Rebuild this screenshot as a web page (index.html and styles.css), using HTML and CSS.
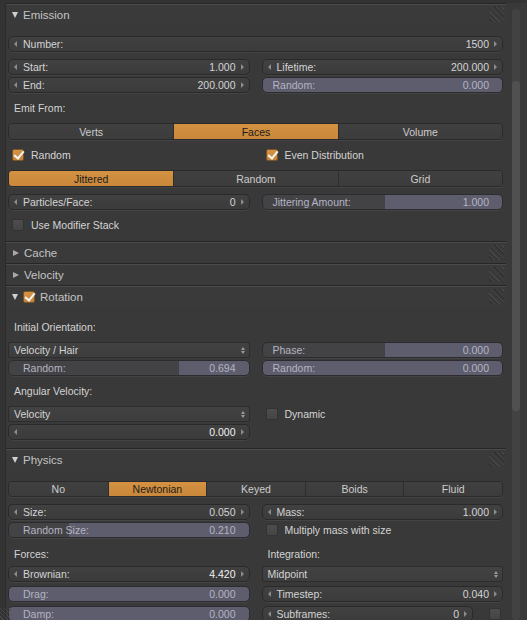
FILE: index.html
```html
<!DOCTYPE html>
<html lang="en">
<head>
  <meta charset="UTF-8">
  <title>Particle Settings</title>
  <link rel="stylesheet" href="styles.css">
</head>
<body>
  <div class="region">
    <div class="panels">

      <section class="panel">
        <div class="head"><i class="tri down"></i><span class="title">Emission</span><i class="grip"></i></div>
        <div class="body emission">
          <div class="num"><span>Number:</span><span>1500</span></div>
          <div class="cols">
            <div class="col">
              <div class="num"><span>Start:</span><span>1.000</span></div>
              <div class="num"><span>End:</span><span>200.000</span></div>
            </div>
            <div class="col">
              <div class="num"><span>Lifetime:</span><span>200.000</span></div>
              <div class="slider" style="--p:0%"><span>Random:</span><span>0.000</span></div>
            </div>
          </div>
          <div class="label">Emit From:</div>
          <div class="seg"><span>Verts</span><span class="on">Faces</span><span>Volume</span></div>
          <div class="cols">
            <label class="check"><span class="box on"></span>Random</label>
            <label class="check"><span class="box on"></span>Even Distribution</label>
          </div>
          <div class="seg"><span class="on">Jittered</span><span>Random</span><span>Grid</span></div>
          <div class="cols">
            <div class="num"><span>Particles/Face:</span><span>0</span></div>
            <div class="slider" style="--p:51%"><span>Jittering Amount:</span><span>1.000</span></div>
          </div>
          <label class="check"><span class="box"></span>Use Modifier Stack</label>
        </div>
      </section>

      <section class="panel">
        <div class="head"><i class="tri right"></i><span class="title">Cache</span><i class="grip"></i></div>
      </section>

      <section class="panel">
        <div class="head"><i class="tri right"></i><span class="title">Velocity</span><i class="grip"></i></div>
      </section>

      <section class="panel">
        <div class="head"><i class="tri down"></i><span class="box on"></span><span class="title">Rotation</span><i class="grip"></i></div>
        <div class="body rotation">
          <div class="label">Initial Orientation:</div>
          <div class="cols">
            <div class="col">
              <div class="menu"><span>Velocity / Hair</span><i class="updown"></i></div>
              <div class="slider" style="--p:71%"><span>Random:</span><span>0.694</span></div>
            </div>
            <div class="col">
              <div class="slider" style="--p:51%"><span>Phase:</span><span>0.000</span></div>
              <div class="slider" style="--p:0%"><span>Random:</span><span>0.000</span></div>
            </div>
          </div>
          <div class="label">Angular Velocity:</div>
          <div class="cols">
            <div class="col">
              <div class="menu"><span>Velocity</span><i class="updown"></i></div>
              <div class="num"><span></span><span class="bright">0.000</span></div>
            </div>
            <div class="col">
              <label class="check"><span class="box"></span>Dynamic</label>
            </div>
          </div>
        </div>
      </section>

      <section class="panel">
        <div class="head"><i class="tri down"></i><span class="title">Physics</span><i class="grip"></i></div>
        <div class="body physics">
          <div class="seg"><span>No</span><span class="on">Newtonian</span><span>Keyed</span><span>Boids</span><span>Fluid</span></div>
          <div class="cols">
            <div class="col">
              <div class="num"><span>Size:</span><span>0.050</span></div>
              <div class="slider" style="--p:25%"><span>Random Size:</span><span>0.210</span></div>
              <div class="label sub">Forces:</div>
              <div class="stack">
                <div class="num"><span>Brownian:</span><span class="bright">4.420</span></div>
                <div class="slider" style="--p:0%"><span>Drag:</span><span>0.000</span></div>
                <div class="slider" style="--p:0%"><span>Damp:</span><span>0.000</span></div>
              </div>
            </div>
            <div class="col">
              <div class="num"><span>Mass:</span><span>1.000</span></div>
              <label class="check"><span class="box"></span>Multiply mass with size</label>
              <div class="label sub">Integration:</div>
              <div class="stack">
                <div class="menu"><span>Midpoint</span><i class="updown"></i></div>
                <div class="num"><span>Timestep:</span><span>0.040</span></div>
                <div class="split">
                  <div class="num"><span>Subframes:</span><span>0</span></div>
                  <span class="box"></span>
                </div>
              </div>
            </div>
          </div>
        </div>
      </section>

    </div>
    <div class="scroll">
      <div class="track"><div class="thumb"></div></div>
    </div>
  </div>
  <i class="corner"></i>
</body>
</html>
```

FILE: styles.css
```css
* {
  margin: 0;
  padding: 0;
  box-sizing: border-box;
}

html,
body {
  height: 100%;
}

body {
  position: relative;
  overflow: hidden;
  background: #393939;
  color: #d4d4d4;
  font-family: "Liberation Sans", Arial, sans-serif;
  font-size: 10.5px;
}

.region {
  display: flex;
  height: 620px;
  padding-top: 3px;
  background: #333;
}

.panels {
  width: 501px;
  background: #393939;
  border-left: 1px solid #2b2b2b;
  margin-left: 5px;
}

.panel {
  border-top: 1px solid #262626;
}

.head {
  display: flex;
  align-items: center;
  height: 21px;
  padding-left: 6px;
  background: #3a3a3a;
  box-shadow: inset 0 1px 0 #4b4b4b;
  color: #c2c2c2;
  font-size: 11.5px;
}

.head .title {
  flex: 1;
}

.head .box {
  margin-right: 5px;
}

.tri {
  display: block;
  width: 0;
  height: 0;
  margin-right: 5px;
}

.tri.down {
  border-left: 3.5px solid transparent;
  border-right: 3.5px solid transparent;
  border-top: 6px solid #cfcfcf;
  margin-top: 1px;
}

.tri.right {
  border-top: 3.5px solid transparent;
  border-bottom: 3.5px solid transparent;
  border-left: 6px solid #a9a9a9;
  margin-left: 1px;
  margin-right: 5px;
}

.grip {
  display: block;
  width: 15px;
  height: 15px;
  margin-right: 2px;
  background: repeating-linear-gradient(45deg, transparent 0 2px, #2e2e2e 2px 3px, #4a4a4a 3px 4px);
  opacity: .8;
}

.body {
  display: flex;
  flex-direction: column;
  gap: 7px;
  padding: 11px 3px 8px 2px;
}

.rotation {
  padding-top: 12px;
}

.cols {
  display: grid;
  grid-template-columns: 1fr 1fr;
  column-gap: 12px;
}

.col {
  display: flex;
  flex-direction: column;
  gap: 2px;
}

.label {
  height: 16px;
  line-height: 16px;
  padding-left: 6px;
}

.label.sub {
  margin-top: 6px;
  margin-bottom: 2px;
}

.stack {
  display: flex;
  flex-direction: column;
  gap: 4px;
}

/* number field with arrows */
.num {
  position: relative;
  display: flex;
  align-items: center;
  justify-content: space-between;
  height: 16px;
  padding: 0 13px 0 14px;
  background: linear-gradient(#414141, #3b3b3b);
  border: 1px solid #2a2a2a;
  border-radius: 5px;
  box-shadow: 0 1px 0 #444;
}

.num:before,
.num:after {
  content: '';
  position: absolute;
  top: 4px;
  border-top: 3px solid transparent;
  border-bottom: 3px solid transparent;
}

.num:before {
  left: 5px;
  border-right: 3px solid #8c8c8c;
}

.num:after {
  right: 5px;
  border-left: 3px solid #8c8c8c;
}

.bright {
  color: #f0f0f0;
}

/* slider */
.slider {
  display: flex;
  align-items: center;
  justify-content: space-between;
  height: 16px;
  padding: 0 13px 0 14px;
  background: linear-gradient(to right, #434346 var(--p), #5d5d6d var(--p));
  border: 1px solid #2c2c30;
  border-radius: 5px;
  color: #b4b4c2;
  box-shadow: 0 1px 0 #444;
}

.col:last-child .slider,
.cols > .slider {
  padding-left: 10px;
}

/* dropdown */
.menu {
  display: flex;
  align-items: center;
  justify-content: space-between;
  height: 16px;
  padding: 0 4px 0 5px;
  background: linear-gradient(#424242, #3d3d3d);
  border: 1px solid #2d2d2d;
  border-radius: 2px;
}

.updown {
  display: flex;
  flex-direction: column;
  gap: 1px;
}

.updown:before,
.updown:after {
  content: '';
  border-left: 2.5px solid transparent;
  border-right: 2.5px solid transparent;
}

.updown:before {
  border-bottom: 3px solid #9a9a9a;
}

.updown:after {
  border-top: 3px solid #9a9a9a;
}

/* segmented toggle row */
.seg {
  display: grid;
  grid-auto-columns: 1fr;
  grid-auto-flow: column;
  height: 17px;
  border: 1px solid #2a2a2a;
  border-radius: 4px;
  overflow: hidden;
  box-shadow: 0 1px 0 #444;
}

.seg span {
  display: flex;
  align-items: center;
  justify-content: center;
  background: linear-gradient(#404040, #3c3c3c);
  border-left: 1px solid #2e2e2e;
  color: #cccccc;
}

.seg span:first-child {
  border-left: 0;
}

.seg span.on {
  background: linear-gradient(#d49242, #c8873a);
  color: #1c1c1c;
}

.physics .seg {
  height: 16px;
}

/* checkboxes */
.check {
  display: flex;
  align-items: center;
  gap: 7px;
  height: 16px;
  padding-left: 4px;
}

.box {
  position: relative;
  display: block;
  flex: none;
  width: 12px;
  height: 12px;
  border-radius: 2px;
  background: linear-gradient(#4d4d4d, #454545);
  border: 1px solid #333;
}

.box.on {
  background: linear-gradient(#d59444, #c4843a);
  border-color: #7a5527;
}

.box.on:after {
  content: '';
  position: absolute;
  left: 3px;
  top: -1px;
  width: 4px;
  height: 8px;
  border-right: 2px solid #f4f4f4;
  border-bottom: 2px solid #f4f4f4;
  transform: rotate(40deg);
}

.split {
  display: flex;
  align-items: center;
  gap: 16px;
}

.split .num {
  flex: 1;
}

.split .box {
  margin-right: 2px;
}

/* scrollbar */
.scroll {
  flex: 1;
  background: #393939;
  padding: 6px 7px 0 6px;
}

.track {
  height: 100%;
  border-radius: 4px;
  background: #424242;
  padding-top: 72px;
}

.thumb {
  height: 330px;
  border-radius: 4px;
  background: #505050;
}

.corner {
  position: absolute;
  left: 0;
  bottom: 0;
  width: 12px;
  height: 12px;
  background: repeating-linear-gradient(45deg, transparent 0 2px, #555 2px 3px);
  opacity: .6;
}
```
